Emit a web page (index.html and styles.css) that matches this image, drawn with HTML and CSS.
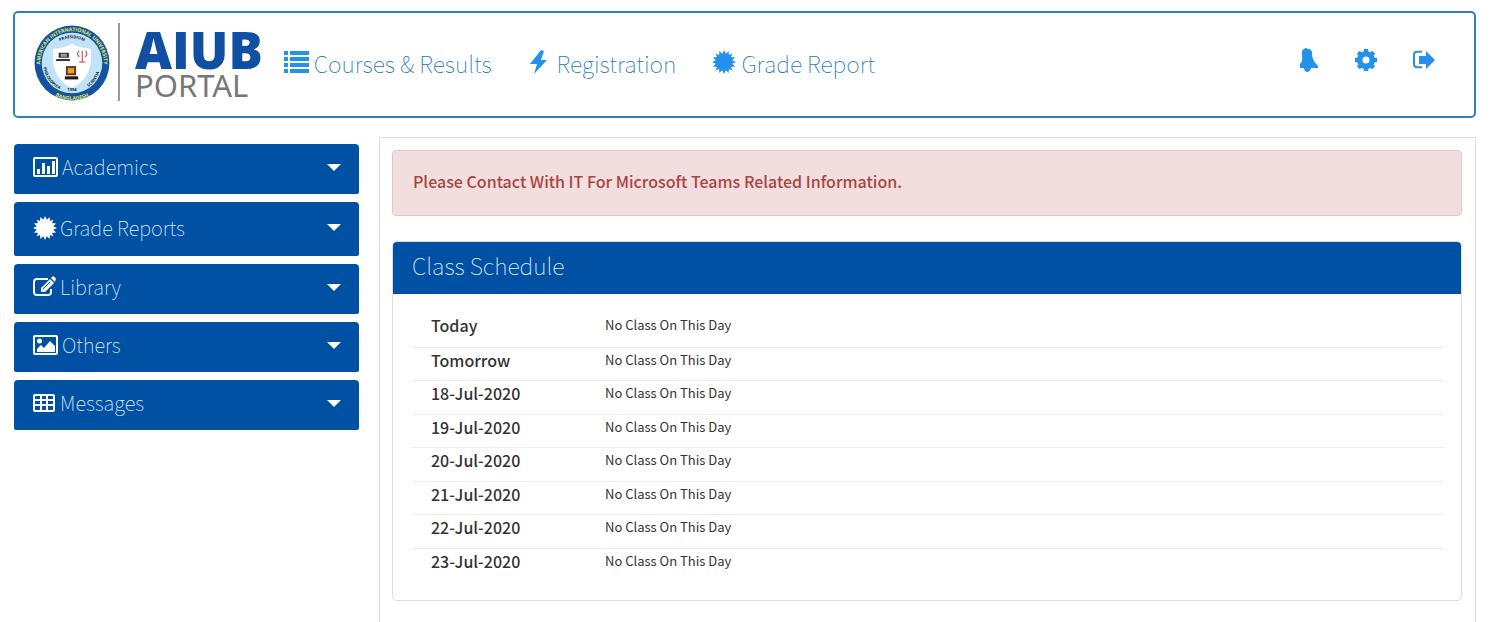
FILE: index.html
```html
<!DOCTYPE html>
<html lang="en">
<head>
<meta charset="utf-8">
<title>AIUB Portal</title>
<link rel="stylesheet" href="styles.css">
</head>
<body>
<svg class="sprite" aria-hidden="true">
  <symbol id="certificate" viewBox="-12 -12 24 24"><path d="M0-12 1.96-8.23 4.59-11.09 5-7 8.49-8.49 7-5 11.09-4.59 8.23-1.76 12 0 8.23 1.76 11.09 4.59 7 5 8.49 8.49 5 7 4.59 11.09 1.76 8.23 0 12-1.76 8.23-4.59 11.09-5 7-8.49 8.49-7 5-11.09 4.59-8.23 1.76-12 0-8.23-1.76-11.09-4.59-7-5-8.49-8.49-5-7-4.59-11.09-1.76-8.23z" fill="currentColor"/></symbol>
</svg>
<header class="topbar">
  <a class="brand" href="#" aria-label="AIUB Portal">
    <svg class="seal" viewBox="0 0 76 76" aria-hidden="true">
      <defs>
        <path id="arc-top" d="M9 49A31 31 0 1 1 67 49"/>
        <path id="arc-bottom" d="M12 63A36 36 0 0 0 64 63"/>
        <path id="arc-pres" d="M16 27A25 25 0 0 1 60 27"/>
        <path id="arc-left" d="M10 39A28.500 28.500 0 0 0 29 65"/>
        <path id="arc-right" d="M47 65A28.500 28.500 0 0 0 66 39"/>
      </defs>
      <circle cx="38" cy="38" r="36.500" fill="#14539e"/>
      <circle cx="38" cy="38" r="29.500" fill="#bfe3f8"/>
      <path d="M38 19Q30 24 20 24C17 43 25 57 38 62C51 57 59 43 56 24Q46 24 38 19Z" fill="#fff"/>
      <path d="M25 28h10v5H25zM23 34h13v2H22z" fill="#333"/>
      <path d="M27 29h6v3h-6z" fill="#999"/>
      <path d="M48 28v9M45 37h6M45 26q-3 3 0 6M51 26q3 3 0 6M48 26v4" stroke="#d33a44" fill="none"/>
      <path d="M32 41h10v9H32z" fill="#6b3a1c"/>
      <path d="M34 43h6v5h-6z" fill="#e9a32c"/>
      <path d="M31 51h13v3H31z" fill="#1d1713"/>
      <text class="seal-gold"><textPath href="#arc-top" startOffset="50%">AMERICAN INTERNATIONAL UNIVERSITY</textPath></text>
      <text class="seal-gold"><textPath href="#arc-bottom" startOffset="50%">BANGLADESH</textPath></text>
      <text class="seal-dark"><textPath href="#arc-pres" startOffset="50%">PRAESIDIUM</textPath></text>
      <text class="seal-dark"><textPath href="#arc-left" startOffset="50%">PHILOSOPHIA</textPath></text>
      <text class="seal-dark"><textPath href="#arc-right" startOffset="50%">SCIENTIA</textPath></text>
      <text class="seal-dark" x="38" y="65">1994</text>
    </svg>
    <span class="wordmark"><span class="word-top">AIUB</span><span class="word-sub">PORTAL</span></span>
  </a>
  <nav class="mainnav">
    <a href="#"><svg class="icon" viewBox="0 0 26 24"><path d="M0 1h4v4H0zM0 7h4v4H0zM0 13h4v4H0zM0 19h4v4H0zM6 1h19v4H6zM6 7h19v4H6zM6 13h19v4H6zM6 19h19v4H6z" fill="currentColor"/></svg><span>Courses &amp; Results</span></a>
    <a href="#"><svg class="icon" viewBox="0 0 26 24"><path d="M14 0 3 14h7L7 24 20 10h-6l3-9z" fill="currentColor"/></svg><span>Registration</span></a>
    <a href="#"><svg class="icon"><use href="#certificate"/></svg><span>Grade Report</span></a>
  </nav>
  <div class="tools">
    <button type="button" aria-label="Notifications"><svg viewBox="0 0 24 26"><path d="M8 2Q10 0 12 2q4 0 4 4 0 8 6 13v2h-7q-1 4-4 4-3-1-3-4H4v-4q3-3 2-8Q5 3 8 2z" fill="currentColor"/></svg></button>
    <button type="button" aria-label="Settings"><svg viewBox="-12 -12 24 24"><circle r="6.300" fill="none" stroke="currentColor" stroke-width="5.600"/><path d="M0-8v-3M0 8v3M-8 0h-3M8 0h3M5.700-5.700l2-2M-5.700-5.700l-2-2M5.700 5.700l2 2M-5.700 5.700l-2 2" stroke="currentColor" stroke-width="4.400"/></svg></button>
    <button type="button" aria-label="Log out"><svg viewBox="0 0 24 24"><path d="M10 3.800H5Q2 3.800 2 7v9q0 3.200 3 3.200h5" fill="none" stroke="currentColor" stroke-width="2"/><path d="M7 8h7V3l9 9-9 9v-5H7z" fill="currentColor"/></svg></button>
  </div>
</header>
<div class="layout">
  <aside class="menu">
    <button type="button"><svg class="icon" viewBox="0 0 26 24"><rect x="1" y="3" width="23" height="18" rx="1" fill="none" stroke="currentColor" stroke-width="2"/><path d="M4 14h3v5H4zM9 8h3v11H9zM14 11h3v8h-3zM19 6h3v13h-3z" fill="currentColor"/></svg><span class="label">Academics</span><span class="caret"></span></button>
    <button type="button" class="tall"><svg class="icon narrow"><use href="#certificate"/></svg><span class="label">Grade Reports</span><span class="caret"></span></button>
    <button type="button"><svg class="icon narrow" viewBox="0 0 24 24"><path d="M15 4H4Q1 4 1 7v10q0 3 3 3h11q3 0 3-3v-3" fill="none" stroke="currentColor" stroke-width="2"/><path d="M8 13 17 4l4 4-9 9H8zM18 3l1.500-1.500q1-.5 2 .5l1 1q1 1 0 2L22 7z" fill="currentColor"/><path d="m10 14 7-7" stroke="#0050a4"/></svg><span class="label">Library</span><span class="caret"></span></button>
    <button type="button"><svg class="icon" viewBox="0 0 26 24"><rect x="1" y="3" width="23" height="18" rx="1" fill="none" stroke="currentColor" stroke-width="2"/><circle cx="6.500" cy="8" r="2.500" fill="currentColor"/><path d="M4 19v-3l4-4 3 3 6-7 5 5v6z" fill="currentColor"/></svg><span class="label">Others</span><span class="caret"></span></button>
    <button type="button"><svg class="icon narrow" viewBox="0 0 24 24"><path d="M2 4h18q1 0 1 1v14q0 1-1 1H2q-1 0-1-1V5q0-1 1-1zM1 9h20M1 14h20M8 4v16M14 4v16" fill="none" stroke="currentColor" stroke-width="2"/></svg><span class="label">Messages</span><span class="caret"></span></button>
  </aside>
  <main class="content">
    <div class="alert" role="alert">Please Contact With IT For Microsoft Teams Related Information.</div>
    <section class="panel">
      <h2>Class Schedule</h2>
      <div class="panel-body">
        <table>
          <tbody>
            <tr><th scope="row">Today</th><td>No Class On This Day</td></tr>
            <tr><th scope="row">Tomorrow</th><td>No Class On This Day</td></tr>
            <tr><th scope="row">18-Jul-2020</th><td>No Class On This Day</td></tr>
            <tr><th scope="row">19-Jul-2020</th><td>No Class On This Day</td></tr>
            <tr><th scope="row">20-Jul-2020</th><td>No Class On This Day</td></tr>
            <tr><th scope="row">21-Jul-2020</th><td>No Class On This Day</td></tr>
            <tr><th scope="row">22-Jul-2020</th><td>No Class On This Day</td></tr>
            <tr><th scope="row">23-Jul-2020</th><td>No Class On This Day</td></tr>
          </tbody>
        </table>
      </div>
    </section>
  </main>
</div>
</body>
</html>
```
FILE: styles.css
```css
* { box-sizing: border-box; }
body {
  margin: 0;
  min-height: 100vh;
  display: flex;
  flex-direction: column;
  padding: 11px 22px 0 13px;
  background: #fff;
  color: #333;
  font-family: "Noto Sans CJK JP", "Noto Sans", sans-serif;
  font-size: 13px;
}
.sprite { position: absolute; width: 0; height: 0; }
button { font: inherit; color: inherit; border: 0; background: none; cursor: pointer; }
a { color: inherit; text-decoration: none; }

.topbar {
  display: flex;
  align-items: flex-start;
  min-height: 107px;
  border: 2px solid #2f80bd;
  border-radius: 5px;
  padding: 10px 38px 0 18px;
  color: #2492eb;
}
.brand { display: flex; align-items: flex-start; }
.seal { width: 78px; height: 78px; margin-top: 1px; }
.seal text { text-anchor: middle; font-family: "Open Sans", sans-serif; font-weight: 700; }
.seal-gold { font-size: 5px; fill: #e2ee55; }
.seal-dark { font-size: 4px; fill: #123; }
.wordmark {
  display: flex;
  flex-direction: column;
  margin-left: 7px;
  padding: 5px 0 0 15px;
  height: 78px;
  border-left: 2px solid #999;
  font-family: "Open Sans", sans-serif;
}
.word-top { color: #114fa3; font-size: 51px; line-height: 42px; font-weight: 800; }
.word-sub { color: #777; font-family: "Noto Sans", sans-serif; font-size: 31px; line-height: 31px; font-weight: 400; }

.mainnav { display: flex; gap: 35px; margin: 22px 0 0 21px; }
.mainnav a { display: flex; align-items: flex-start; gap: 4px; font-size: 23px; line-height: 37px; font-weight: 100; color: #1878ba; white-space: nowrap; }
.icon { width: 26px; height: 24px; flex: none; }
.mainnav .icon { margin-top: 5px; color: #2492eb; }
.tools { display: flex; gap: 34px; margin: 24px 0 0 auto; }
.tools button { padding: 0; width: 24px; height: 26px; }
.tools svg { display: block; width: 24px; height: 26px; }

.layout { display: grid; grid-template-columns: 345px 1fr; gap: 20px; margin-top: 19px; padding-left: 1px; flex: 1; }
.menu { display: flex; flex-direction: column; gap: 8px; margin-top: 7px; }
.menu button {
  display: flex;
  align-items: center;
  gap: 3px;
  min-height: 50px;
  padding: 0 18px 4px 19px;
  background: #0050a4;
  color: #fff;
  border-radius: 4px 4px 2px 2px;
  font-size: 20px;
  line-height: 30px;
  font-weight: 100;
}
.menu .tall { min-height: 54px; padding-bottom: 3px; }
.menu .narrow { width: 24px; }
.label { color: #e2f3ff; }
.caret { margin-left: auto; border: 7px solid transparent; border-top-color: #fff; border-bottom: 0; }

.content { border: 1px solid #ddd; border-bottom: 0; padding: 12px 13px 0 12px; }
.alert {
  padding: 15px 20px;
  min-height: 66px;
  border: 1px solid #e6c6ca;
  border-radius: 4px;
  background: #f2dede;
  color: #a94442;
  font-size: 16px;
  line-height: 30px;
  font-weight: 500;
}
.panel { margin-top: 25px; border: 1px solid #ddd; border-radius: 5px; overflow: hidden; }
.panel h2 { margin: 0; padding: 5px 19px 10px; background: #0050a4; color: #e2f3ff; font-size: 23px; line-height: 37px; font-weight: 100; }
.panel-body { padding: 19px 17px 19px 19px; }
table { width: 100%; border-collapse: collapse; }
tr { border-bottom: 1px solid #eee; }
tr:last-child { border-bottom: 0; }
th, td { height: 33px; padding: 0; text-align: left; vertical-align: top; line-height: 24px; }
tr:nth-child(odd) > * { height: 34px; }
th { width: 193px; padding-left: 19px; font-size: 16px; font-weight: 500; }
td { font-size: 13px; }
```
